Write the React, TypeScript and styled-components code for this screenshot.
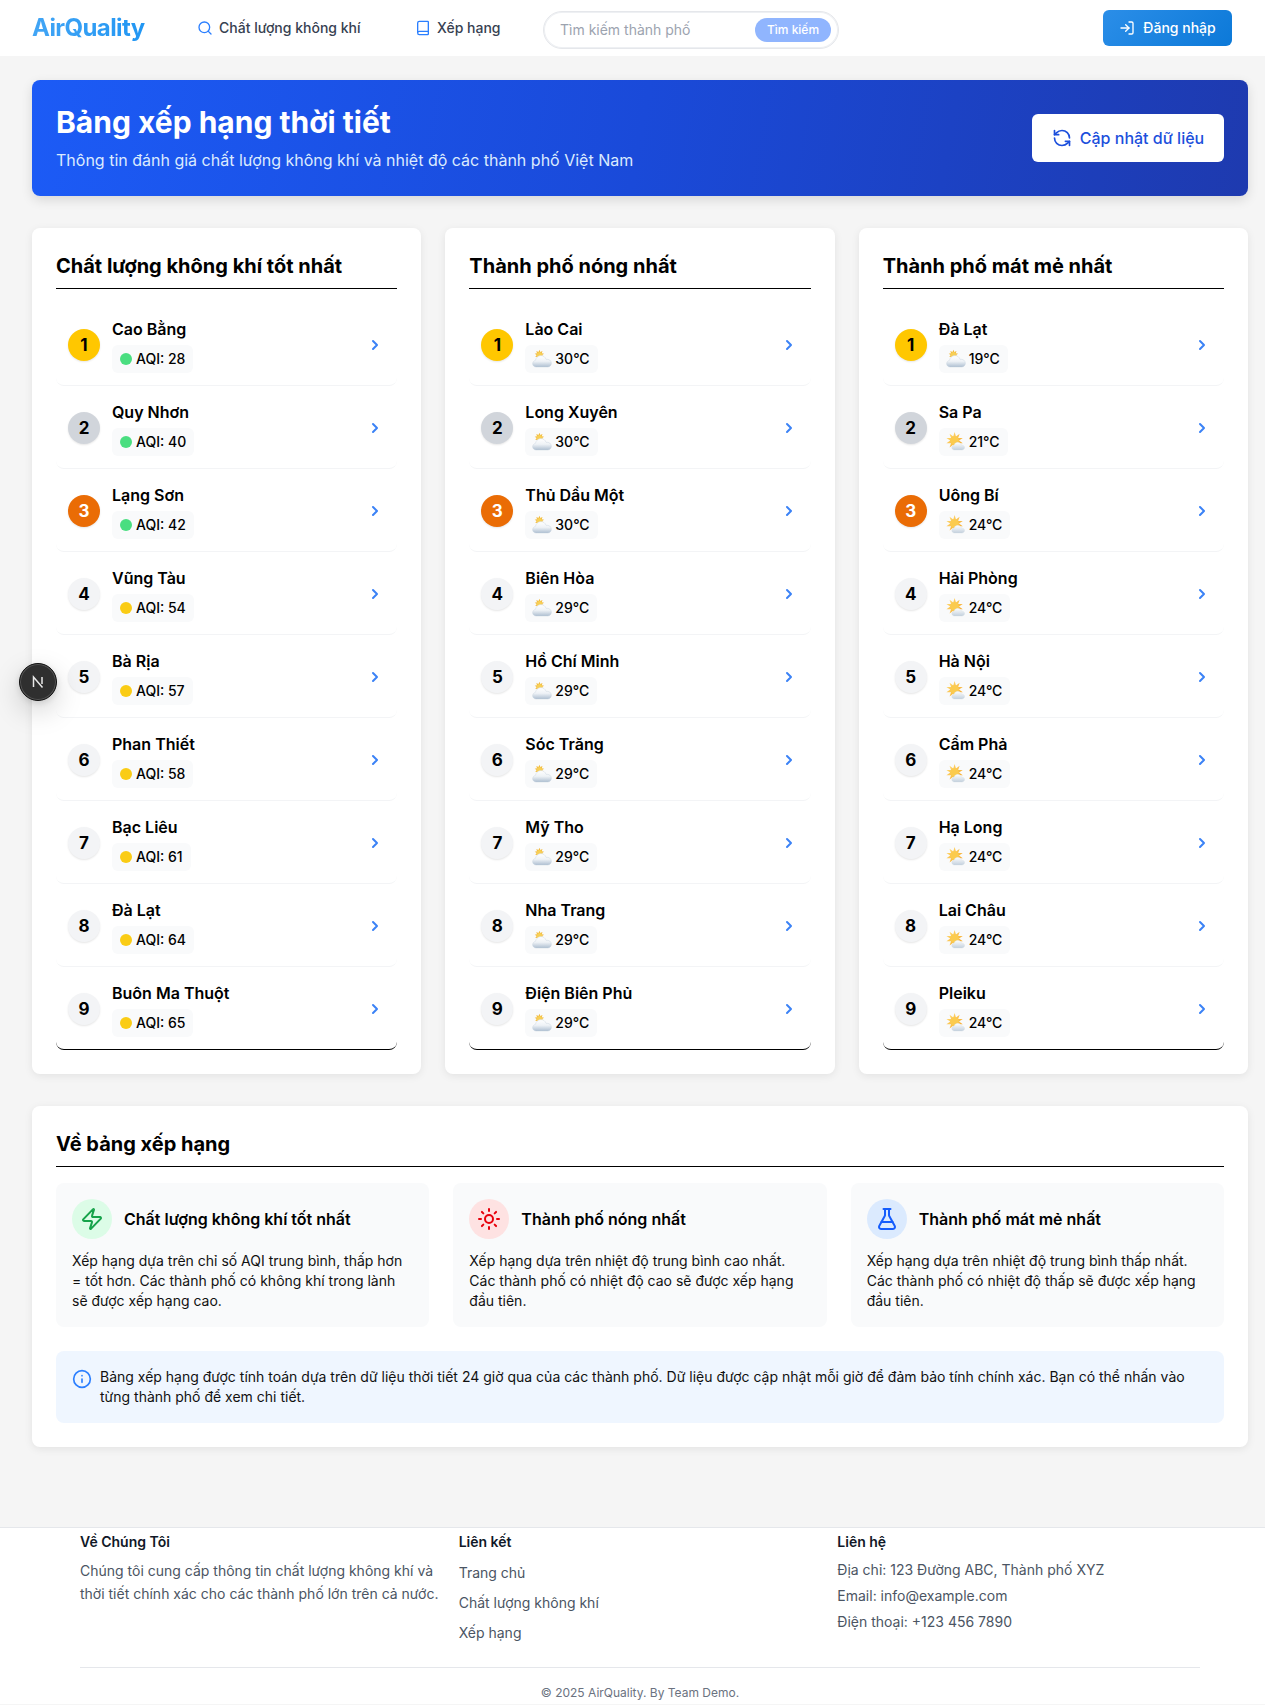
import React from 'react';
import styled, { createGlobalStyle } from 'styled-components';
import { Search, Book, LogIn, RefreshCcw, ChevronRight, Zap, Sun, FlaskConical, Info } from 'lucide-react';

const Global = createGlobalStyle`
  * { box-sizing: border-box; }
  html, body { margin: 0; padding: 0; }
  body { background: #f5f5f5; color: #000; font-family: Inter, "Noto Sans", sans-serif; font-size: 16px; line-height: 24px; }
  h1, h2, h3, h4, p, ul { margin: 0; padding: 0; }
  ul { list-style: none; }
`;

const Page = styled.div`
  position: relative;
  width: 1265px;
  height: 1705px;
  overflow: hidden;
`;

const Header = styled.header`
  height: 56px;
  background: #fff;
  display: flex;
  align-items: center;
  padding: 0 33px 0 32px;
`;

const Logo = styled.div`
  width: 165px;
  font-size: 24px;
  line-height: 32px;
  font-weight: 700;
  letter-spacing: -0.6px;
  span {
    background: linear-gradient(90deg, #42a5f5, #2196f3);
    -webkit-background-clip: text;
    background-clip: text;
    color: transparent;
  }
`;

const NavLink = styled.a<{ $w: number }>`
  display: flex;
  align-items: center;
  gap: 6px;
  width: ${p => p.$w}px;
  font-size: 14px;
  line-height: 20px;
  font-weight: 500;
  color: #374151;
  svg { color: #2b7fff; flex: none; }
`;

const SearchBox = styled.div`
  width: 296px;
  height: 38px;
  margin-top: 4px;
  border: 1px solid #e5e7eb;
  box-shadow: 0 0 0 1px #eef0f3 inset;
  border-radius: 999px;
  display: flex;
  align-items: center;
  justify-content: space-between;
  padding: 0 7px 0 16px;
`;

const Placeholder = styled.span`
  font-size: 14px;
  color: #9ca3af;
`;

const SearchButton = styled.span`
  width: 76px;
  height: 24px;
  border-radius: 999px;
  background: #90b5fe;
  color: #fff;
  font-size: 12px;
  line-height: 24px;
  font-weight: 500;
  text-align: center;
`;

const LoginButton = styled.button`
  margin-left: auto;
  width: 129px;
  height: 36px;
  border: 0;
  border-radius: 6px;
  background: linear-gradient(135deg, #2b8ee8, #0c79d8);
  color: #fff;
  font: 500 14px/20px Inter, sans-serif;
  display: flex;
  align-items: center;
  justify-content: center;
  gap: 8px;
`;

const Main = styled.main`
  padding: 24px 17px 80px 32px;
`;

const Hero = styled.section`
  height: 116px;
  border-radius: 8px;
  background: linear-gradient(100deg, #1c5bf6 0%, #1a4ad9 50%, #1e3aaf 100%);
  box-shadow: 0 4px 12px rgba(0, 0, 0, 0.12);
  color: #fff;
  padding: 0 24px;
  display: flex;
  align-items: center;
  justify-content: space-between;
`;

const HeroTitle = styled.h1`
  font-size: 30px;
  line-height: 36px;
  font-weight: 700;
  margin-bottom: 8px;
`;

const HeroSub = styled.p`
  font-size: 16px;
  line-height: 24px;
  color: #dbeafe;
`;

const RefreshButton = styled.button`
  width: 192px;
  height: 48px;
  border: 0;
  border-radius: 6px;
  background: #fff;
  color: #1c4fdc;
  font: 500 16px/24px Inter, sans-serif;
  display: flex;
  align-items: center;
  justify-content: center;
  gap: 8px;
`;

const Columns = styled.div`
  margin-top: 32px;
  display: grid;
  grid-template-columns: repeat(3, 1fr);
  gap: 24px;
`;

const Card = styled.section`
  background: #fff;
  border-radius: 8px;
  box-shadow: 0 2px 8px rgba(0, 0, 0, 0.08);
  padding: 24px;
`;

const CardTitle = styled.h2`
  font-size: 20px;
  line-height: 28px;
  font-weight: 700;
  padding-bottom: 8px;
  border-bottom: 1px solid #000;
`;

const List = styled.ul`
  margin-top: 14px;
`;

const Row = styled.li<{ $last: boolean }>`
  height: 83px;
  padding: 14px 12px 12px;
  border-radius: 8px;
  border-bottom: 1px solid ${p => (p.$last ? '#000' : '#f3f4f6')};
  display: flex;
  align-items: center;
  gap: 12px;
`;

const rankBg = ['#ffc700', '#d1d5db', '#ea6c05'];

const Rank = styled.div<{ $rank: number }>`
  flex: none;
  width: 32px;
  height: 32px;
  border-radius: 50%;
  background: ${p => rankBg[p.$rank - 1] ?? '#f3f4f6'};
  color: ${p => (p.$rank === 3 ? '#fff' : '#000')};
  box-shadow: 0 1px 2px rgba(0, 0, 0, 0.1);
  font-size: 17px;
  line-height: 32px;
  font-weight: 700;
  text-align: center;
`;

const RowBody = styled.div`
  flex: 1;
  min-width: 0;
`;

const CityName = styled.div`
  font-size: 16px;
  line-height: 24px;
  font-weight: 600;
`;

const Chip = styled.div`
  display: inline-flex;
  align-items: center;
  gap: 4px;
  height: 28px;
  margin-top: 4px;
  padding: 0 8px;
  border-radius: 6px;
  background: #f9fafb;
  font-size: 14px;
  line-height: 20px;
  font-weight: 500;
  vertical-align: top;
`;

const Dot = styled.span<{ $color: string }>`
  width: 12px;
  height: 12px;
  border-radius: 50%;
  background: ${p => p.$color};
`;

const Arrow = styled(ChevronRight)`
  flex: none;
  margin-right: 2px;
  color: #3b82f6;
`;

const AboutCard = styled(Card)`
  margin-top: 32px;
`;

const AboutGrid = styled.div`
  margin-top: 16px;
  display: grid;
  grid-template-columns: repeat(3, 1fr);
  gap: 24px;
`;

const AboutItem = styled.div`
  height: 144px;
  padding: 16px;
  border-radius: 8px;
  background: #f9fafb;
`;

const AboutHead = styled.div`
  display: flex;
  align-items: center;
  gap: 12px;
  margin-bottom: 12px;
`;

const IconCircle = styled.div<{ $bg: string; $fg: string }>`
  width: 40px;
  height: 40px;
  border-radius: 50%;
  background: ${p => p.$bg};
  color: ${p => p.$fg};
  display: flex;
  align-items: center;
  justify-content: center;
`;

const AboutTitle = styled.h3`
  font-size: 16px;
  line-height: 24px;
  font-weight: 600;
`;

const AboutText = styled.p`
  font-size: 14px;
  line-height: 20px;
  color: #111;
`;

const Note = styled.div`
  margin-top: 24px;
  height: 72px;
  padding: 16px;
  border-radius: 8px;
  background: #eff6ff;
  display: flex;
  gap: 8px;
  font-size: 14px;
  line-height: 20px;
  color: #111;
  svg { flex: none; margin-top: 2px; color: #2b7fff; }
`;

const Footer = styled.footer`
  background: #fff;
  border-top: 1px solid #e5e7eb;
  padding: 4px 65px 0 80px;
  height: 177px;
`;

const FooterGrid = styled.div`
  display: grid;
  grid-template-columns: repeat(3, 1fr);
  gap: 16px;
  height: 136px;
  border-bottom: 1px solid #e5e7eb;
`;

const FooterHead = styled.h4`
  font-size: 14px;
  line-height: 20px;
  font-weight: 600;
  color: #111827;
`;

const FooterPara = styled.p`
  margin-top: 7px;
  font-size: 14px;
  line-height: 23px;
  color: #4b5563;
`;

const FooterLinks = styled.ul`
  margin-top: 6px;
  li { font-size: 14px; line-height: 30px; color: #4b5563; }
`;

const FooterContacts = styled.ul`
  margin-top: 5px;
  li { font-size: 14px; line-height: 26px; color: #4b5563; }
`;

const Copy = styled.p`
  margin-top: 17px;
  text-align: center;
  font-size: 12px;
  line-height: 16px;
  color: #6b7280;
`;

const DevBadge = styled.div`
  position: absolute;
  left: 19px;
  top: 663px;
  width: 38px;
  height: 38px;
  border-radius: 50%;
  background: #2f2f2f;
  border: 1px solid #111;
  box-shadow: 0 0 0 1px #555 inset, 0 10px 28px rgba(0, 0, 0, 0.18), 0 2px 6px rgba(0, 0, 0, 0.12);
  display: flex;
  align-items: center;
  justify-content: center;
`;

const WeatherSvg = styled.svg`
  flex: none;
  width: 18px;
  height: 18px;
  overflow: visible;
`;

const burst = (cx: number, cy: number, outer: number, inner: number, n: number) =>
  Array.from({ length: n * 2 }, (_, i) => {
    const r = i % 2 ? inner : outer;
    const a = (Math.PI * i) / n - Math.PI / 2;
    return `${(cx + r * Math.cos(a)).toFixed(2)},${(cy + r * Math.sin(a)).toFixed(2)}`;
  }).join(' ');

const CloudSun = () => (
  <WeatherSvg viewBox="0 0 18 18">
    <defs>
      <linearGradient id="cl1" x1="0" y1="0" x2="0" y2="1">
        <stop offset="0" stopColor="#ffffff" />
        <stop offset="0.5" stopColor="#eef2f6" />
        <stop offset="1" stopColor="#aebfd1" />
      </linearGradient>
    </defs>
    <polygon points={burst(6.4, 4.6, 4.8, 2.7, 9)} fill="#f2b93b" />
    <circle cx="6.4" cy="4.6" r="2.6" fill="#f7cf55" />
    <path d="M3.2 17C1.2 17-.4 15.6-.4 13.7c0-1.6 1.2-3 2.8-3.3C3 7.6 5.2 5.6 7.9 5.6c2.4 0 4.4 1.5 5.1 3.7 3-.5 5.4 1.3 5.4 3.9 0 2.2-1.7 3.8-3.8 3.8z" fill="url(#cl1)" stroke="#c2cedb" strokeWidth="0.4" />
  </WeatherSvg>
);

const SunCloud = () => (
  <WeatherSvg viewBox="0 0 18 18">
    <defs>
      <linearGradient id="cl2" x1="0" y1="0" x2="0" y2="1">
        <stop offset="0" stopColor="#ffffff" />
        <stop offset="1" stopColor="#c3d0dd" />
      </linearGradient>
      <linearGradient id="sn2" x1="0" y1="0" x2="1" y2="1">
        <stop offset="0" stopColor="#ffe07a" />
        <stop offset="1" stopColor="#f5a020" />
      </linearGradient>
    </defs>
    <polygon points={burst(7.6, 7.6, 8.6, 4.4, 10)} fill="url(#sn2)" />
    <circle cx="7.6" cy="7.6" r="4.3" fill="#fbcb4e" />
    <path d="M7.6 17c-1.6 0-2.8-1.1-2.8-2.5 0-1.3 1-2.3 2.3-2.5.4-1.6 1.9-2.7 3.7-2.7 1.8 0 3.3 1.1 3.7 2.7 1.7 0 3.1 1.1 3.1 2.5S16.300 17 14.800 17z" fill="url(#cl2)" stroke="#cfd8e2" strokeWidth="0.3" />
  </WeatherSvg>
);

const aqi: [string, number][] = [
  ['Cao Bằng', 28], ['Quy Nhơn', 40], ['Lạng Sơn', 42], ['Vũng Tàu', 54], ['Bà Rịa', 57],
  ['Phan Thiết', 58], ['Bạc Liêu', 61], ['Đà Lạt', 64], ['Buôn Ma Thuột', 65],
];
const hot: [string, number][] = [
  ['Lào Cai', 30], ['Long Xuyên', 30], ['Thủ Dầu Một', 30], ['Biên Hòa', 29], ['Hồ Chí Minh', 29],
  ['Sóc Trăng', 29], ['Mỹ Tho', 29], ['Nha Trang', 29], ['Điện Biên Phủ', 29],
];
const cool: [string, number][] = [
  ['Đà Lạt', 19], ['Sa Pa', 21], ['Uông Bí', 24], ['Hải Phòng', 24], ['Hà Nội', 24],
  ['Cẩm Phả', 24], ['Hạ Long', 24], ['Lai Châu', 24], ['Pleiku', 24],
];

type Kind = 'aqi' | 'temp';

const RankCard = ({ title, items, kind }: { title: string; items: [string, number][]; kind: Kind }) => (
  <Card>
    <CardTitle>{title}</CardTitle>
    <List>
      {items.map(([name, v], i) => (
        <Row key={name} $last={i === items.length - 1}>
          <Rank $rank={i + 1}>{i + 1}</Rank>
          <RowBody>
            <CityName>{name}</CityName>
            <Chip>
              {kind === 'aqi' ? <Dot $color={v <= 50 ? '#4ade80' : '#facc15'} /> : v >= 25 || v === 19 ? <CloudSun /> : <SunCloud />}
              {kind === 'aqi' ? `AQI: ${v}` : `${v}°C`}
            </Chip>
          </RowBody>
          <Arrow size={16} strokeWidth={3} />
        </Row>
      ))}
    </List>
  </Card>
);

export default function App() {
  return (
    <Page>
      <Global />
      <Header>
        <Logo><span>AirQuality</span></Logo>
        <NavLink $w={218}><Search size={16} />Chất lượng không khí</NavLink>
        <NavLink $w={128}><Book size={16} />Xếp hạng</NavLink>
        <SearchBox>
          <Placeholder>Tìm kiếm thành phố</Placeholder>
          <SearchButton>Tìm kiếm</SearchButton>
        </SearchBox>
        <LoginButton><LogIn size={16} />Đăng nhập</LoginButton>
      </Header>
      <Main>
        <Hero>
          <div>
            <HeroTitle>Bảng xếp hạng thời tiết</HeroTitle>
            <HeroSub>Thông tin đánh giá chất lượng không khí và nhiệt độ các thành phố Việt Nam</HeroSub>
          </div>
          <RefreshButton><RefreshCcw size={20} />Cập nhật dữ liệu</RefreshButton>
        </Hero>
        <Columns>
          <RankCard title="Chất lượng không khí tốt nhất" items={aqi} kind="aqi" />
          <RankCard title="Thành phố nóng nhất" items={hot} kind="temp" />
          <RankCard title="Thành phố mát mẻ nhất" items={cool} kind="temp" />
        </Columns>
        <AboutCard>
          <CardTitle>Về bảng xếp hạng</CardTitle>
          <AboutGrid>
            <AboutItem>
              <AboutHead>
                <IconCircle $bg="#dcfce7" $fg="#16a34a"><Zap size={24} /></IconCircle>
                <AboutTitle>Chất lượng không khí tốt nhất</AboutTitle>
              </AboutHead>
              <AboutText>Xếp hạng dựa trên chỉ số AQI trung bình, thấp hơn = tốt hơn. Các thành phố có không khí trong lành sẽ được xếp hạng cao.</AboutText>
            </AboutItem>
            <AboutItem>
              <AboutHead>
                <IconCircle $bg="#fee2e2" $fg="#e7000b"><Sun size={24} /></IconCircle>
                <AboutTitle>Thành phố nóng nhất</AboutTitle>
              </AboutHead>
              <AboutText>Xếp hạng dựa trên nhiệt độ trung bình cao nhất. Các thành phố có nhiệt độ cao sẽ được xếp hạng đầu tiên.</AboutText>
            </AboutItem>
            <AboutItem>
              <AboutHead>
                <IconCircle $bg="#dbeafe" $fg="#155dfc"><FlaskConical size={24} /></IconCircle>
                <AboutTitle>Thành phố mát mẻ nhất</AboutTitle>
              </AboutHead>
              <AboutText>Xếp hạng dựa trên nhiệt độ trung bình thấp nhất. Các thành phố có nhiệt độ thấp sẽ được xếp hạng đầu tiên.</AboutText>
            </AboutItem>
          </AboutGrid>
          <Note>
            <Info size={20} />
            <span>Bảng xếp hạng được tính toán dựa trên dữ liệu thời tiết 24 giờ qua của các thành phố. Dữ liệu được cập nhật mỗi giờ để đảm bảo tính chính xác. Bạn có thể nhấn vào từng thành phố để xem chi tiết.</span>
          </Note>
        </AboutCard>
      </Main>
      <Footer>
        <FooterGrid>
          <div>
            <FooterHead>Về Chúng Tôi</FooterHead>
            <FooterPara>Chúng tôi cung cấp thông tin chất lượng không khí và thời tiết chính xác cho các thành phố lớn trên cả nước.</FooterPara>
          </div>
          <div>
            <FooterHead>Liên kết</FooterHead>
            <FooterLinks>
              <li>Trang chủ</li>
              <li>Chất lượng không khí</li>
              <li>Xếp hạng</li>
            </FooterLinks>
          </div>
          <div>
            <FooterHead>Liên hệ</FooterHead>
            <FooterContacts>
              <li>Địa chỉ: 123 Đường ABC, Thành phố XYZ</li>
              <li>Email: info@example.com</li>
              <li>Điện thoại: +123 456 7890</li>
            </FooterContacts>
          </div>
        </FooterGrid>
        <Copy>© 2025 AirQuality. By Team Demo.</Copy>
      </Footer>
      <DevBadge>
        <svg width="16" height="16" viewBox="0 0 16 16" fill="none" stroke="#e8e8e8" strokeWidth="1.5">
          <path d="M3.5 13V3L12.5 13.5M12 3v7" />
        </svg>
      </DevBadge>
    </Page>
  );
}
